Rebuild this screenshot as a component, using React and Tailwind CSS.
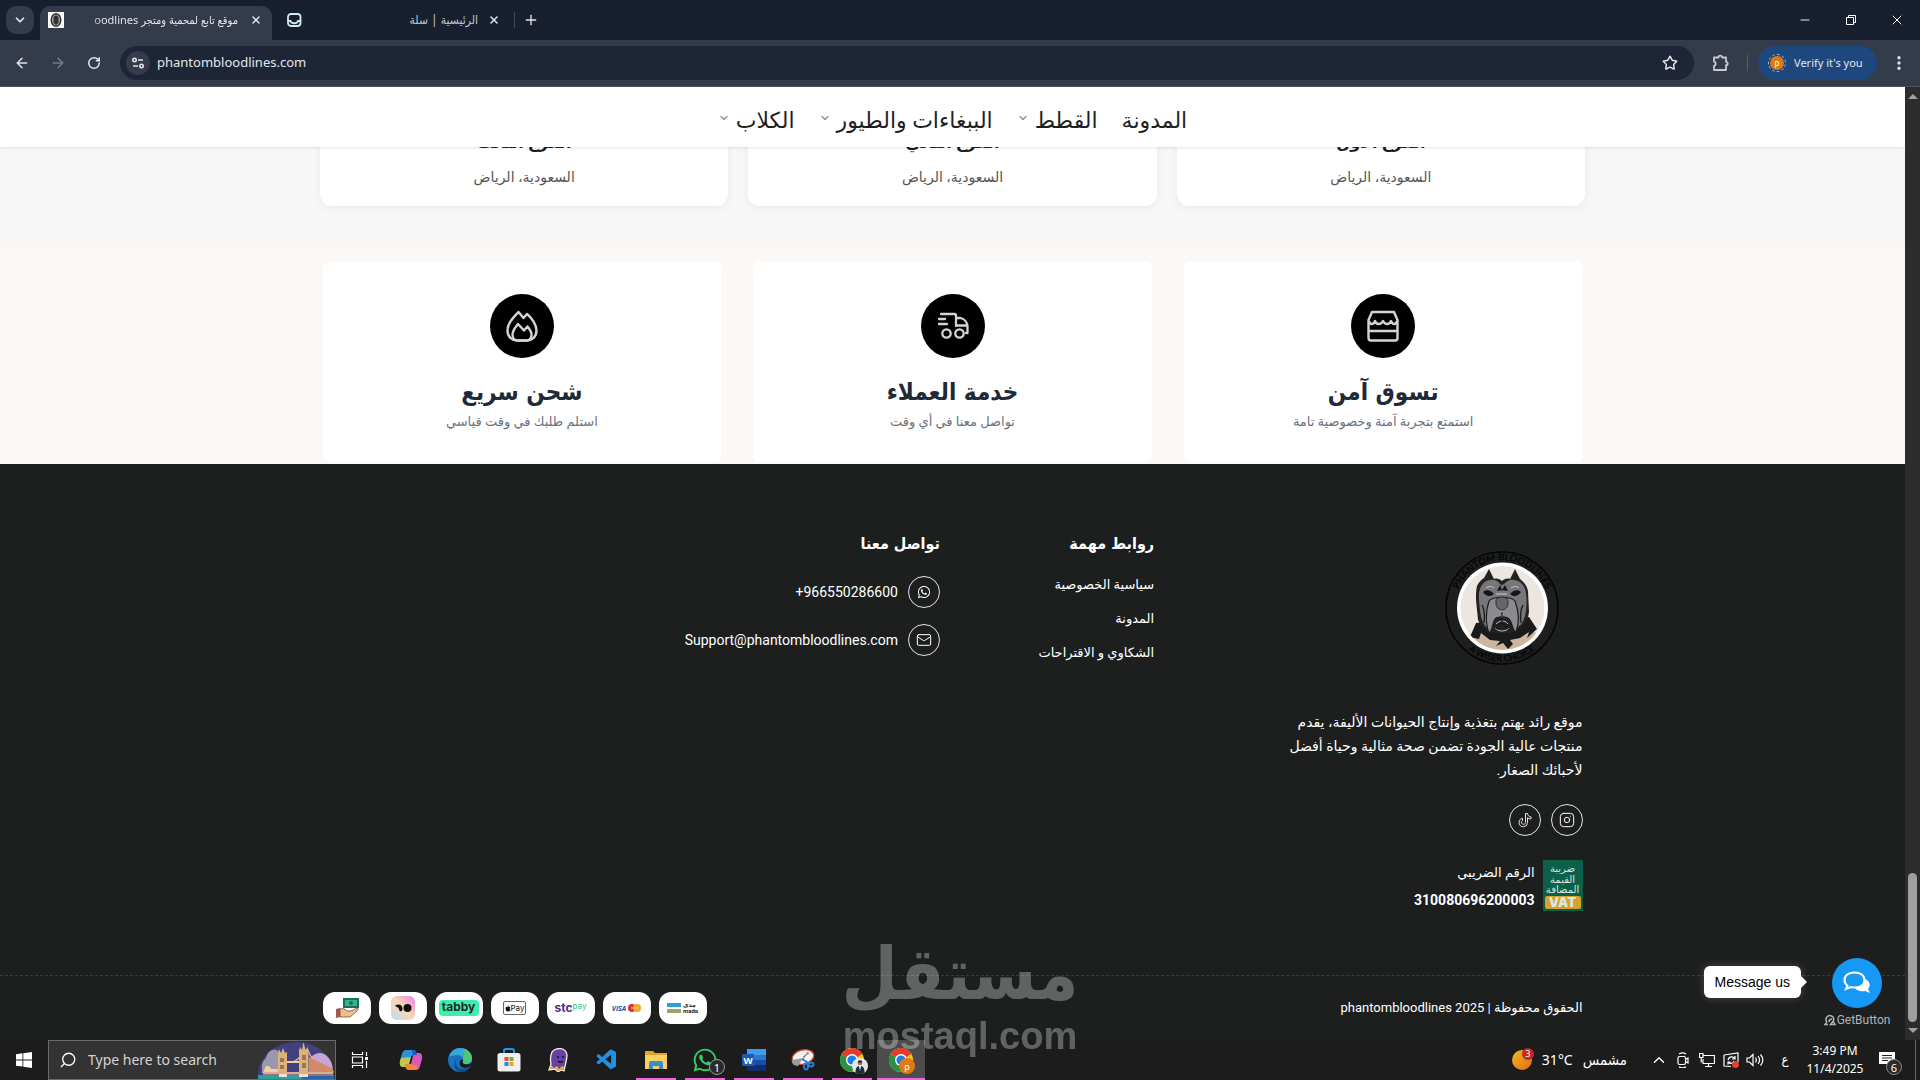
import React from 'react';
import { FaWhatsapp } from 'react-icons/fa';
import { VscVscode } from 'react-icons/vsc';
import {
  ArrowLeft,
  ArrowRight,
  ChevronDown,
  ChevronUp,
  EllipsisVertical,
  Instagram,
  Mail,
  Minus,
  Plus,
  RotateCw,
  Search,
  Star,
  X,
} from 'lucide-react';

const navItems = [
  { label: 'المدونة', menu: false },
  { label: 'القطط', menu: true },
  { label: 'الببغاءات والطيور', menu: true },
  { label: 'الكلاب', menu: true },
];

const branches = ['الفرع الأول', 'الفرع الثاني', 'الفرع الثالث'];

const StoreIcon = () => (
  <svg viewBox="0 0 32 32" className="size-8" fill="none" stroke="#d4d4d4" strokeWidth="2.4" strokeLinejoin="round">
    <path d="M5 2h22l3.500 8v18a2.500 2.500 0 0 1-2.500 2.500H4A2.500 2.500 0 0 1 1.500 28V10z" />
    <path d="M2 11c1 4 4.500 4 6 0c1.500 4 6 4 8 0c2 4 6.500 4 8 0c1.500 4 5 4 6 0M2 21h28" />
  </svg>
);

const TruckIcon = () => (
  <svg viewBox="0 0 32 32" className="size-8" fill="none" stroke="#d4d4d4" strokeWidth="2.3" strokeLinejoin="round" strokeLinecap="round">
    <path d="M4 4h13.500a1.500 1.500 0 0 1 1.500 1.500V16M2 9h6M2 14h8M19 8h4.500c4 1 7 4.500 7 9v6H29M19 15.500h11" />
    <circle cx="9.500" cy="23.500" r="4.200" />
    <circle cx="22.500" cy="23.500" r="4.200" />
  </svg>
);

const FireIcon = () => (
  <svg viewBox="0 0 32 32" className="size-8" fill="none" stroke="#d4d4d4" strokeWidth="2.4" strokeLinejoin="round">
    <path d="M12.500 2C7 8 1.500 13 1.500 20.500C1.500 27 6 30.500 11 30.500h10c5 0 9.500-3.500 9.500-10c0-6-5-13-9.500-16.500L17.500 8z" />
    <path d="M12 14c-3 4-5.500 6.500-5.500 10.500c0 4 2.500 6 5 6h9c3 0 5-2 5-6c0-3-2-5.500-4-8l-3.500 4z" />
  </svg>
);

const features = [
  { title: 'تسوق آمن', text: 'استمتع بتجربة آمنة وخصوصية تامة', Icon: StoreIcon },
  { title: 'خدمة العملاء', text: 'تواصل معنا في أي وقت', Icon: TruckIcon },
  { title: 'شحن سريع', text: 'استلم طلبك في وقت قياسي', Icon: FireIcon },
];

const TikTokIcon = () => (
  <svg viewBox="0 0 16 16" className="size-4" fill="none" stroke="#e5e5e5" strokeWidth="1" strokeLinejoin="round">
    <path d="M8.500 1.500h2c.2 2 1.500 3.200 3.500 3.400v2c-1.400 0-2.500-.4-3.500-1.100v4.700a4.200 4.200 0 1 1-5-4.100v2.200a2 2 0 1 0 3 1.900z" />
  </svg>
);

const DogLogo = () => (
  <svg viewBox="0 0 114 114" className="size-[114px]" role="img" aria-label="Phantom Bloodlines">
    <defs>
      <path id="ringTop" d="M9.500 57a47.500 47.500 0 0 1 95 0" />
      <path id="ringBottom" d="M3.500 57a53.500 53.500 0 0 0 107 0" />
      <clipPath id="dogClip">
        <circle cx="57.500" cy="57" r="42" />
      </clipPath>
    </defs>
    <circle cx="57" cy="57" r="56" fill="none" stroke="#050505" strokeWidth="1.600" />
    <text fill="#050505" fontSize="9.500" fontWeight="700" fontFamily="Lato, sans-serif">
      <textPath href="#ringTop" startOffset="50%" textAnchor="middle">PHANTOM BLOODLINES</textPath>
    </text>
    <text fill="#050505" fontSize="9" fontWeight="700" fontFamily="Lato, sans-serif">
      <textPath href="#ringBottom" startOffset="50%" textAnchor="middle">A WISER CHOICE</textPath>
    </text>
    <circle cx="57.500" cy="57" r="45.500" fill="#fff" />
    <circle cx="57.500" cy="57" r="42" fill="#ebe6df" />
    <g clipPath="url(#dogClip)">
      <path d="M22 86l10-8h50l14 6v24H20z" fill="#cdb5a0" />
      <path d="M31 72l-6 14l9 2l2-6l9 7l10 1l-4 5l7-3l5 6l5-5l-3-4l10-2l9-6l-2 6l10-9L84 66z" fill="#1b1a1b" />
      <path d="M32 35c2-4 4-6 7-8l5-9l5 10c3-1 6 0 8 2c2-2 5-3 8-2l5-10l5 10c4 3 7 7 8 12l1 21c-1 8-4 13-8 16c-5 4-9 5-13 5H51c-8-1-14-4-18-13l-2-20c0-6 0-11 1-14z" fill="#232122" />
      <path d="M35 38c2-6 7-10 14-9c4 0 6 5 8 5s4-4 8-5c7-1 13 3 15 9c2 6 2 14 1 21c-1 9-4 15-8 17c-5-1-3-9-6-12c-4-3-14-3-18 0c-3 3-1 11-6 13c-5-3-7-9-8-18c-1-8-2-16 0-21z" fill="#77767a" />
      <path d="M44 50c4-5 22-5 26 0c3 8 5 20 1 31c-4-1-3-9-7-13c-2-3-12-3-14 0c-3 4-2 12-6 14c-4-10-3-23 0-32z" fill="#8b8a8e" stroke="#1c1b1c" strokeWidth="1.200" />
      <path d="M51 49c2-4 10-4 12 0v4c0 3-3 6-6 6s-6-3-6-6z" fill="#66656a" stroke="#222" strokeWidth=".8" />
      <path d="M38 41c3-3 8-2 11 2c-3 3-8 3-11-2zM76 41c-3-3-8-2-11 2c3 3 8 3 11-2zM52 40l3-6l2 5l3-5l3 6c-4-1-7-1-11 0z" fill="#161516" />
      <path d="M57 60v7M50 77c3 4 11 4 14 0M51 73c4-4 9-4 12 0M41 37c3-2 6-2 8 0M66 37c3-2 6-2 8 0M51 43h11" fill="none" stroke="#d4d3d6" strokeWidth=".9" />
      <path d="M57 61v10l-6 7M57 71l6 7M37 54c3 5 3 10 2 18M78 54c-3 5-3 10-2 18" fill="none" stroke="#1b1a1b" strokeWidth="1.300" />
    </g>
  </svg>
);

const Puzzle = () => (
  <svg viewBox="0 0 18 18" className="size-[18px]" fill="none" stroke="#c7cad1" strokeWidth="1.800" strokeLinejoin="round">
    <path d="M2 3.500h4.500a1.800 1.800 0 0 1 3.600 0H14v4.300a1.700 1.700 0 0 1 0 3.400V16H2v-4a2.200 2.200 0 0 0 0-4.300z" />
  </svg>
);

const BrowserChrome = () => (
  <header className="shrink-0 border-b border-[#51545c] bg-[#343b4b] font-['Noto_Sans','DejaVu_Sans_Condensed','DejaVu_Sans',sans-serif] text-[#e3e5e9]">
    <div className="flex h-10 items-center bg-[#182030]">
      <button aria-label="Search tabs" className="ml-1.5 flex size-7 items-center justify-center rounded-[10px] bg-[#343b4b]">
        <ChevronDown className="size-3.5" strokeWidth={3} />
      </button>
      <div className="ml-1.5 flex h-[34px] w-[232px] items-center self-end rounded-t-[10px] bg-[#343b4b] px-2 pb-1.5">
        <svg viewBox="0 0 16 16" className="size-4 shrink-0 bg-white">
          <ellipse cx="8" cy="8" rx="5.500" ry="7" fill="#333" />
          <ellipse cx="8" cy="8" rx="4" ry="5.500" fill="#aaa" />
          <path d="M5.500 5l1.500-1.500h2L10.500 5v6L8 13l-2.500-2z" fill="#333" />
        </svg>
        <span dir="rtl" className="ml-2 flex-1 text-[11px] whitespace-nowrap [mask-image:linear-gradient(to_right,transparent,black_32px)]">
          موقع تابع لمحمية ومتجر oodlines
        </span>
        <button aria-label="Close tab" className="ml-2.5 flex size-4 items-center justify-center">
          <X className="size-3" strokeWidth={3} />
        </button>
      </div>
      <div className="flex h-[34px] w-[242px] items-center pr-3 pl-3.5">
        <svg viewBox="0 0 16 16" className="size-4" fill="none" stroke="#cfeeec" strokeWidth="1.800">
          <rect x="2" y="2" width="12.500" height="12" rx="3" />
          <path d="M2 9h2.500c1 3 6.500 3 7.500 0h2.500" />
        </svg>
        <span dir="rtl" className="flex-1 text-xs text-[#c3c6cc]">الرئيسية | سلة</span>
        <button aria-label="Close tab" className="ml-2 flex size-4 items-center justify-center">
          <X className="size-3" strokeWidth={3} />
        </button>
      </div>
      <span className="h-4 w-px bg-[#414857]" />
      <button aria-label="New tab" className="ml-2 flex size-4 items-center justify-center">
        <Plus className="size-4" strokeWidth={2} />
      </button>
      <div className="ml-auto flex text-white">
        <button aria-label="Minimize" className="flex h-10 w-[46px] items-center justify-center">
          <Minus className="size-3.5" strokeWidth={1.5} />
        </button>
        <button aria-label="Restore" className="flex h-10 w-[46px] items-center justify-center">
          <svg viewBox="0 0 10 10" className="size-2.5" fill="none" stroke="currentColor">
            <path d="M.5 2.500h7v7h-7zM2.500 2.500v-2h7v7h-2" />
          </svg>
        </button>
        <button aria-label="Close" className="flex h-10 w-[46px] items-center justify-center">
          <X className="size-4" strokeWidth={1.5} />
        </button>
      </div>
    </div>
    <div className="flex h-[46px] items-center px-3">
      <button aria-label="Back" className="flex size-5 items-center justify-center">
        <ArrowLeft className="size-4" strokeWidth={2.2} />
      </button>
      <button aria-label="Forward" className="ml-4 flex size-5 items-center justify-center text-[#767b86]">
        <ArrowRight className="size-4" strokeWidth={2.2} />
      </button>
      <button aria-label="Reload" className="mx-4 flex size-5 items-center justify-center">
        <RotateCw className="size-3.5" strokeWidth={2.6} />
      </button>
      <div className="flex h-[34px] flex-1 items-center rounded-full bg-[#1e2536] pr-4 pl-1.5">
        <button aria-label="Site information" className="flex size-6 items-center justify-center rounded-full bg-[#343b4b]">
          <svg viewBox="0 0 14 14" className="size-3.5" fill="none" stroke="#e3e5e9" strokeWidth="1.600">
            <circle cx="3.500" cy="4" r="1.700" />
            <circle cx="10.500" cy="10" r="1.700" />
            <path d="M7 4h5M2 10h5" />
          </svg>
        </button>
        <input
          aria-label="Address"
          defaultValue="phantombloodlines.com"
          className="ml-[7px] flex-1 bg-transparent text-[13px] outline-none"
        />
        <button aria-label="Bookmark">
          <Star className="size-4" strokeWidth={2.2} />
        </button>
      </div>
      <button aria-label="Extensions" className="ml-[18px]">
        <Puzzle />
      </button>
      <span className="ml-[17px] h-4 w-px bg-[#565b67]" />
      <button className="ml-2.5 flex h-[34px] w-[119px] items-center gap-2 rounded-full bg-[#1e477e] pl-2.5 text-[11px]">
        <span className="flex size-[18px] shrink-0 items-center justify-center rounded-full border border-dashed border-[#9dbdf0]">
          <span className="flex size-3.5 items-center justify-center rounded-full bg-[#dd7a12] text-[8px] text-white">p</span>
        </span>
        Verify it's you
      </button>
      <button aria-label="Menu" className="ml-[13px]">
        <EllipsisVertical className="size-[18px]" strokeWidth={2.5} />
      </button>
    </div>
  </header>
);

const SiteNav = () => (
  <nav className="relative z-10 flex h-[60px] shrink-0 items-center justify-center gap-6 bg-white pt-1.5 shadow-[0_1px_3px_rgba(0,0,0,0.1)]">
    {navItems.map((item) => (
      <a key={item.label} href="#" className="flex items-center gap-1.5 text-[22px] text-[#1d1f1f]">
        {item.label}
        {item.menu && <ChevronDown className="mb-1 size-3 text-[#8b8d91]" strokeWidth={2.5} />}
      </a>
    ))}
  </nav>
);

const PayLogos = () => (
  <div className="flex flex-row-reverse gap-2">
    <span className="flex h-8 w-12 items-center justify-center rounded-xl bg-white">
      <svg viewBox="0 0 24 22" className="h-[22px] w-6">
        <rect x="8" y="1" width="16" height="10" fill="#1d6d5c" />
        <rect x="10" y="3" width="12" height="6" fill="#35b58a" />
        <circle cx="16" cy="6" r="2" fill="#1d6d5c" />
        <path d="M1 12l4-1v9l-4 1z" fill="#a35b4a" />
        <path d="M5 12c3-1 5 0 7 2h4l6-3c2 0 1 2 0 3l-7 6H5z" fill="#edbd94" stroke="#7a5038" strokeWidth=".8" />
      </svg>
    </span>
    <span className="flex h-8 w-12 items-center justify-center rounded-xl bg-white">
      <span className="flex size-6 items-center justify-center rounded-md bg-linear-to-tr from-[#b5dcf8] via-[#f9d8b4] to-[#ee7be8]">
        <svg viewBox="0 0 18 8" className="h-2 w-[18px]">
          <path d="M1 1.500C5-1 9 1 8.500 5.500C8 8 5 8 5 5C4 3 2 3 1 1.500z" fill="#111" />
          <circle cx="13.500" cy="4" r="4" fill="#111" />
        </svg>
      </span>
    </span>
    <span className="flex h-8 w-12 items-center justify-center rounded-xl bg-white">
      <span className="flex h-4 w-10 items-center justify-center rounded-sm bg-[#3bf0ae] pb-0.5 font-['Inter',sans-serif] text-[12px] leading-none font-bold text-[#292929]">tabby</span>
    </span>
    <span className="flex h-8 w-12 items-center justify-center rounded-xl bg-white">
      <span dir="ltr" className="flex h-3.5 w-[23px] items-center justify-center rounded-xs border border-[#666] font-['Inter',sans-serif] text-[8px] leading-none text-[#111]">
        <svg viewBox="0 0 8 9" className="h-[7px] w-1.5 shrink-0">
          <path d="M4 2.500C2 1.500.5 3 .8 5s1.500 4 3.200 3.300C5.500 9 7 7 7.300 6C6 5.500 6 3.500 7.200 3C6.200 1.800 5 2.200 4 2.500zM4 2C4 .8 4.700.2 5.600 0c0 1-.5 1.800-1.600 2z" fill="#111" />
        </svg>
        Pay
      </span>
    </span>
    <span dir="ltr" className="flex h-8 w-12 items-center justify-center rounded-xl bg-white font-['Inter',sans-serif] leading-none">
      <b className="text-[12px] text-[#4f2d7f]">stc</b>
      <span className="pb-1 text-[8px] text-[#25c78e]">pay</span>
    </span>
    <span dir="ltr" className="flex h-8 w-12 items-center justify-center rounded-xl bg-white font-['Open_Sans',sans-serif] leading-none">
      <b className="text-[7px] text-[#1f4f9e] italic">VISA</b>
      <svg viewBox="0 0 13 8" className="ml-0.5 h-2 w-[13px]">
        <circle cx="4" cy="4" r="4" fill="#df2f28" />
        <circle cx="9" cy="4" r="4" fill="#f5a52a" />
        <path d="M3 4h7" stroke="#f7d9c0" strokeWidth="1" />
      </svg>
    </span>
    <span dir="ltr" className="flex h-8 w-12 items-center justify-center gap-0.5 rounded-xl bg-white">
      <span className="flex flex-col gap-0.5">
        <span className="h-1 w-3.5 bg-[#2d9fd8]" />
        <span className="h-1 w-3.5 bg-[#9aa464]" />
      </span>
      <span className="flex flex-col text-[6px] leading-[6px] font-bold text-[#222]">
        <span>مدى</span>
        <span>mada</span>
      </span>
    </span>
  </div>
);

const Footer = () => (
  <footer className="flex flex-1 flex-col justify-between bg-[#1d1f1f] text-white">
    <div className="mx-auto grid w-full max-w-[1260px] grid-cols-[34%_17%_1fr] pt-16">
      <div>
        <div className="mt-[23px] mr-6">
          <DogLogo />
        </div>
        <p className="mt-[45px] text-sm leading-6">
          <span className="block">موقع رائد يهتم بتغذية وإنتاج الحيوانات الأليفة، يقدم</span>
          <span className="block">منتجات عالية الجودة تضمن صحة مثالية وحياة أفضل</span>
          <span className="block">لأحبائك الصغار.</span>
        </p>
        <div className="mt-[22px] flex gap-2.5">
          <a href="#" aria-label="Instagram" className="flex size-8 items-center justify-center rounded-full border border-[#e5e5e5]">
            <Instagram className="size-4" strokeWidth={1.5} />
          </a>
          <a href="#" aria-label="TikTok" className="flex size-8 items-center justify-center rounded-full border border-[#e5e5e5]">
            <TikTokIcon />
          </a>
        </div>
        <div className="mt-6 flex gap-2">
          <div className="flex h-[51px] w-10 flex-col items-center justify-between bg-[#0b6049] p-0.5 text-[10px] leading-[10px] text-[#d7e8e2]">
            <span className="pt-0.5">ضريبة</span>
            <span>القيمة</span>
            <span>المضافة</span>
            <span className="w-full rounded-xs bg-[#d9a02b] text-center font-['Inter',sans-serif] text-[13px] leading-[13px] font-black">VAT</span>
          </div>
          <div>
            <div className="text-[13px] leading-[26px]">الرقم الضريبي</div>
            <div className="text-sm leading-7 font-bold">310080696200003</div>
          </div>
        </div>
      </div>
      <div>
        <h3 className="font-['DejaVu_Sans_Condensed','DejaVu_Sans',sans-serif] text-[16px] leading-8 font-bold">روابط مهمة</h3>
        <ul className="mt-2 text-[13px] leading-[34px]">
          <li><a href="#">سياسية الخصوصية</a></li>
          <li><a href="#">المدونة</a></li>
          <li><a href="#">الشكاوي و الاقتراحات</a></li>
        </ul>
      </div>
      <div>
        <h3 className="font-['DejaVu_Sans_Condensed','DejaVu_Sans',sans-serif] text-[16px] leading-8 font-bold">تواصل معنا</h3>
        <ul className="mt-4 flex flex-col gap-4 text-sm">
          <li>
            <a href="#" className="flex items-center gap-2.5">
              <span className="flex size-8 items-center justify-center rounded-full border border-[#e5e5e5]">
                <FaWhatsapp className="size-3.5" />
              </span>
              <span dir="ltr">+966550286600</span>
            </a>
          </li>
          <li>
            <a href="#" className="flex items-center gap-2.5">
              <span className="flex size-8 items-center justify-center rounded-full border border-[#e5e5e5]">
                <Mail className="size-4" strokeWidth={1.5} />
              </span>
              <span>Support@phantombloodlines.com</span>
            </a>
          </li>
        </ul>
      </div>
    </div>
    <div className="border-t border-dashed border-[#3b3d3d] py-4">
      <div className="mx-auto flex w-full max-w-[1260px] items-center justify-between">
        <p className="text-[13px]">الحقوق محفوظة | 2025 phantombloodlines</p>
        <PayLogos />
      </div>
    </div>
  </footer>
);

const ChatWidget = () => (
  <div className="absolute right-[31px] bottom-3 z-20 flex items-start gap-6 font-['Liberation_Sans',sans-serif]">
    <div className="relative mt-2 flex h-8 items-center rounded-md bg-white px-[11px] text-sm text-black shadow-[0_0_8px_rgba(255,255,255,0.2)]">
      Message us
      <span className="absolute -right-1.5 border-y-6 border-l-6 border-y-transparent border-l-white" />
    </div>
    <div className="flex w-16 flex-col items-center">
      <button aria-label="Open chat" className="flex size-[50px] items-center justify-center rounded-full bg-[#1698f5]">
        <svg viewBox="0 0 28 24" className="h-6 w-7">
          <path d="M22 8c5 2 6 7 3 10l2 4l-5-2c-5 1-9-1-10-3c6 0 10-3 10-9z" fill="#fff" />
          <path d="M11.500 1.500c6 0 10 3 10 7.500s-4 7.500-10 7.500c-1.500 0-2.500 0-3.500-.4L3 18l1.500-3.500C2 13 1.500 11 1.500 9c0-4.500 4-7.500 10-7.500z" fill="#1698f5" stroke="#fff" strokeWidth="2" />
        </svg>
      </button>
      <a href="#" className="mt-1 flex items-center gap-px font-['Roboto',sans-serif] text-xs text-[#b3b4b6]">
        <svg viewBox="0 0 12 12" className="size-3" fill="none" stroke="currentColor" strokeWidth="1.500">
          <path d="M3 8A3.800 3.800 0 1 1 9.300 7L6.500 10.500h4.500L9.300 7.500M3 8L1 10.500h3M5 8c0-2 1.500-3 3-3" />
        </svg>
        GetButton
      </a>
    </div>
  </div>
);

const Scrollbar = () => (
  <div className="flex w-[15px] shrink-0 flex-col items-center justify-between bg-[#2c2c2c] py-[7px]">
    <span className="border-x-5 border-b-5 border-x-transparent border-b-[#a0a0a0]" />
    <span className="flex flex-1 flex-col justify-end pb-1.5">
      <span className="h-[149px] w-[9px] rounded-full bg-[#9f9f9f]" />
    </span>
    <span className="border-x-5 border-t-5 border-x-transparent border-t-[#a0a0a0]" />
  </div>
);

const ChromeIcon = () => (
  <svg viewBox="0 0 24 24" className="size-6">
    <circle cx="12" cy="12" r="12" fill="#fbc116" />
    <path d="M12 12L1.600 6A12 12 0 0 1 22.400 6z" fill="#e33b2e" />
    <path d="M12 12L1.600 6A12 12 0 0 0 12 24l5-9z" fill="#2a9147" />
    <circle cx="12" cy="12" r="6" fill="#fff" />
    <circle cx="12" cy="12" r="4.600" fill="#1a7df0" />
  </svg>
);

const BridgeArt = () => (
  <svg viewBox="0 0 78 38" className="h-[38px] w-[78px]">
    <path d="M1 38C0 15 18 1 40 1s37 16 37 37z" fill="#43407f" />
    <path d="M5 27c-1-7 4-8 5-13c3-7 12-7 13 0l6 10v8H5z" fill="#9c97b0" />
    <path d="M52 22c1-9 10-12 15-9c6 3 9 10 9 18H52z" fill="#c9a3d6" />
    <path d="M24 15q8 13 20 0M51 9q6 18 26 22" fill="none" stroke="#e9b99c" strokeWidth="1.200" />
    <path d="M52 16l24 12v4H52z" fill="#d48a68" />
    <path d="M21 33V13l1-5l2 4l2-5l2 5l2-1v22zM42 33V10l1-4l2 3l1.500-8l2 8l2-3l1 4v23z" fill="#dcb27d" />
    <path d="M23 17h4v4h-4zM23 24h4v4h-4zM45 14h4v5h-4zM45 22h4v5h-4z" fill="#9c7650" />
    <path d="M30 20h12v2H30zM7 29l2-4h3l2 3h7v5H6z" fill="#f0d0a2" />
    <path d="M6 31h70v2.500H6z" fill="#dcae8c" />
    <path d="M1 34h76v4H1z" fill="#2c9fa0" />
    <path d="M46 35h31v3H44z" fill="#2467ad" />
    <path d="M22 33h8v3h-8zM42 33h9v3h-9z" fill="#efe2cc" />
  </svg>
);

const taskbarApps = [
  {
    name: 'Task View',
    icon: (
      <svg viewBox="0 0 18 16" className="h-4 w-[18px]" fill="none" stroke="#fff" strokeWidth="1.200">
        <path d="M1.500 0v2.500h10V0M1.500 16v-2.500h10V16M1.500 5h10v6h-10zM15.500 0v4M15.500 9v7" />
        <path d="M14 5h3v3h-3z" fill="#fff" stroke="none" />
      </svg>
    ),
  },
  {
    name: 'Copilot',
    icon: (
      <svg viewBox="0 0 24 24" className="size-6">
        <path d="M7 2h7c2 0 3 1 3.500 3l.5 2h-3c-2 0-3 1-3.500 3L10 16c-.500 2-1 3-3 3H4c-3 0-3.500-3-3-6L3 6c1-3 2-4 4-4z" fill="#2b93dc" />
        <path d="M2 10l10-1l-2 7c-.5 2-1 3-3 3H4c-3 0-3.500-3-3-6z" fill="#bec94d" />
        <path d="M17 22h-7c-2 0-3-1-3.500-3L6 17h3c2 0 3-1 3.500-3L14 8c.5-2 1-3 3-3h3c3 0 3.500 3 3 6l-2 7c-1 3-2 4-4 4z" fill="#dd59b9" />
        <path d="M6 16h6l7 2c-1 3-1 4-3 4h-6c-2 0-3-1-3.500-3z" fill="#f0853b" />
        <path d="M13 2h1c2 0 3 1 4 5h-4z" fill="#2056bd" />
      </svg>
    ),
  },
  {
    name: 'Edge',
    icon: (
      <svg viewBox="0 0 24 24" className="size-6">
        <circle cx="12" cy="12" r="12" fill="#1673bd" />
        <path d="M1 9C3 3 7 0 12 0c7 0 12 5 12 10c0 4-3 6-6 6c-4 0-4-1-3-3c1-3-2-6-6-6c-3 0-6 1-8 2z" fill="#35a9d8" />
        <path d="M15 .5c5 1 9 5 9 9.500c0 4-3 6-6 6s-4-1-3-3c2-4 1-9 0-12.500z" fill="#4cc878" />
        <path d="M9 10c-3 5 0 11 6 11c3 0 6-1 8-3c-2 4-6 6-11 6c-5-1-8-8-3-14z" fill="#164c85" />
        <path d="M15 13c-1 2 0 3 3 3.500c3 0 5-1 6-2.500c0 3-3 6-7 6c-5 0-6-4-5-7c1-2 3-2 3 0z" fill="#1d1d1d" />
      </svg>
    ),
  },
  {
    name: 'Store',
    icon: (
      <svg viewBox="0 0 24 24" className="size-6">
        <path d="M7 7V3a2 2 0 0 1 2-2h6a2 2 0 0 1 2 2v4" fill="none" stroke="#2196e8" strokeWidth="2" />
        <rect x=".5" y="5" width="23" height="18.500" rx="2.500" fill="#efefef" />
        <path d="M7.500 9h4v4h-4z" fill="#e54c32" />
        <path d="M12.500 9h4v4h-4z" fill="#91a32f" />
        <path d="M7.500 14h4v4h-4z" fill="#2389d8" />
        <path d="M12.500 14h4v4h-4z" fill="#e4a91e" />
      </svg>
    ),
  },
  {
    name: 'Ghost',
    icon: (
      <svg viewBox="0 0 24 24" className="size-6">
        <path d="M6 4c4-5 14-5 15 3c0 5-2 10-3 16l-3-1l-3 2l-3-3l-6 1l2-6c-1-5-1-8 1-12z" fill="#6341a5" stroke="#f2efe9" strokeWidth="1.300" />
        <path d="M4 21l1-4l3 3l3-2l2 3l3-3l2 1l-1 3l-2-1l-3 2l-3-3z" fill="#f5b52c" />
        <path d="M12 8v2M17 8v2M12 13c2 2 4 1 5 0" stroke="#1b1030" strokeWidth="1.600" fill="none" />
      </svg>
    ),
  },
  { name: 'VS Code', icon: <VscVscode className="size-6 text-[#2490df]" /> },
  {
    name: 'Explorer',
    running: true,
    icon: (
      <svg viewBox="0 0 24 24" className="size-6">
        <path d="M1 3h8l2 2h12v16H1z" fill="#e2a42c" />
        <path d="M1 7h22v14H1z" fill="#fbd063" />
        <path d="M5 21v-6l1-2h12l1 2v6h-4v-3H9v3z" fill="#338fce" />
      </svg>
    ),
  },
  {
    name: 'WhatsApp',
    running: true,
    icon: <FaWhatsapp className="size-[26px] text-[#2fd068]" />,
    badge: '1',
  },
  {
    name: 'Word',
    running: true,
    icon: (
      <svg viewBox="0 0 24 24" className="size-6">
        <path d="M5 1h19v22H5z" fill="#174ea6" />
        <path d="M5 1h19v6H5z" fill="#3f9ceb" />
        <path d="M5 7h19v5H5z" fill="#2878d1" />
        <path d="M5 17h19v6H5z" fill="#112e6c" />
        <path d="M0 6h12v12H0z" fill="#1d59b5" />
        <text x="6" y="15.500" fontSize="9.500" fontWeight="700" textAnchor="middle" fill="#fff" fontFamily="Open Sans, sans-serif">W</text>
      </svg>
    ),
  },
  {
    name: 'Snipping Tool',
    running: true,
    icon: (
      <svg viewBox="0 0 24 24" className="size-6">
        <ellipse cx="12" cy="9" rx="11" ry="7" transform="rotate(-14 12 9)" fill="#f3f3f3" stroke="#d9402f" strokeWidth="1.300" />
        <path d="M1 12l11-2l-5 8c-4 0-7-3-6-6z" fill="#9b9b9b" />
        <path d="M12 9l6-4M12 11L17 4" stroke="#777" />
        <g fill="none" stroke="#2c7dd0" strokeWidth="2">
          <path d="M11 11l8 5" />
          <ellipse cx="15" cy="18.500" rx="2" ry="3" />
          <ellipse cx="20" cy="16.500" rx="2.500" ry="2" />
        </g>
      </svg>
    ),
  },
  {
    name: 'Chrome',
    running: true,
    icon: <ChromeIcon />,
    person: true,
  },
  { name: 'Chrome profile p', running: true, active: true, icon: <ChromeIcon />, profile: true },
];

const Taskbar = () => (
  <div className="flex h-10 shrink-0 bg-[#1c1c1c] font-['Noto_Sans','DejaVu_Sans_Condensed','DejaVu_Sans',sans-serif] text-white">
    <button aria-label="Start" className="flex w-12 items-center justify-center">
      <svg viewBox="0 0 16 16" className="size-4" fill="#fff">
        <path d="M0 2.200l6.500-.9v6.200H0zM7.300 1.200L16 0v7.500H7.300zM0 8.400h6.500v6.200L0 13.700zM7.300 8.400H16V16l-8.700-1.200z" />
      </svg>
    </button>
    <div className="flex w-72 items-center border border-[#6b6b6b] bg-[#333] pl-2.5">
      <Search className="size-[18px] -scale-x-100" strokeWidth={1.7} />
      <input
        aria-label="Search"
        placeholder="Type here to search"
        className="ml-[11px] w-0 flex-1 bg-transparent text-sm outline-none placeholder:text-[#d3d3d3]"
      />
      <BridgeArt />
    </div>
    <div className="flex gap-px">
      {taskbarApps.map((app) => (
        <button
          key={app.name}
          aria-label={app.name}
          className={`relative flex w-12 items-center justify-center first:mr-0.5 ${app.active ? 'bg-[#4c4c4c]' : ''}`}
        >
          {app.icon}
          {app.badge && (
            <span className="absolute top-[19px] right-1 flex size-4 items-center justify-center rounded-full border border-[#999] bg-[#2b2b2b] text-[11px] leading-none">
              {app.badge}
            </span>
          )}
          {app.profile && (
            <span className="absolute top-[18px] right-2.5 flex size-4 items-center justify-center rounded-full bg-[#dd7a12] text-[9px] leading-none">p</span>
          )}
          {app.person && (
            <svg viewBox="0 0 16 16" className="absolute top-[18px] right-2 size-4">
              <circle cx="8" cy="8" r="8" fill="#e6e6e8" />
              <circle cx="8" cy="5" r="2.300" fill="#9c7159" />
              <path d="M5.700 4.500a2.300 2.300 0 0 1 4.600 0z" fill="#222" />
              <path d="M3.500 14.500c0-4 1-6.500 4.500-6.500s4.500 2.500 4.500 6.500c-2.500 2-6.500 2-9 0z" fill="#1d2a40" />
              <path d="M7 8h2l-1 5z" fill="#fff" />
            </svg>
          )}
          {app.running && (
            <span className={`absolute bottom-0 h-0.5 bg-[#ee66d8] ${app.active ? 'w-12' : 'w-10'}`} />
          )}
        </button>
      ))}
    </div>
    <div className="ml-auto flex items-center">
      <button className="flex items-center text-sm">
        <span className="relative mr-2.5 size-5 rounded-full bg-linear-to-br from-[#f1b626] to-[#df6d12]">
          <span className="absolute -top-0.5 -right-0.5 flex size-3 items-center justify-center rounded-full bg-[#c4271f] text-[9px] leading-none">3</span>
        </span>
        31°C
        <span className="ml-2.5 text-[15px]">مشمس</span>
      </button>
      <button aria-label="Show hidden icons" className="ml-[23px]">
        <ChevronUp className="size-[18px]" strokeWidth={1.8} />
      </button>
      <svg viewBox="0 0 16 16" className="ml-[7px] size-4" fill="none" stroke="#fff" strokeWidth="1.200">
        <rect x="3" y="4.500" width="7.500" height="8" rx="1.500" />
        <path d="M10.500 7.500l2.500-1.500v5l-2.500-1.500M4 2c2-1.300 5-1.300 7 0M4 14.800c2 1.200 5 1.200 7 0" />
      </svg>
      <svg viewBox="0 0 16 16" className="ml-2 size-4" fill="none" stroke="#fff" strokeWidth="1.200">
        <path d="M4 3.500h11.500v8H4V7M9.500 11.500v3M6 14.500h7M.5 1.500h3.500v4H.5zM2.200 5.500v5" />
      </svg>
      <svg viewBox="0 0 16 16" className="ml-2 size-4" fill="none" stroke="#fff" strokeWidth="1.200">
        <path d="M1 3l14-2v9M1 3v11l7 .5M5 8c1-4 6-4 7-1M12 4v3H9M11 9c-1 3-5 3-6 1M5 12.500V10h2.500" />
        <circle cx="12.500" cy="12.500" r="3.500" fill="#e83f35" stroke="none" />
      </svg>
      <svg viewBox="0 0 18 16" className="ml-[7px] h-4 w-[18px]" fill="none" stroke="#fff" strokeWidth="1.200">
        <path d="M1 6h2.500L7 2.500v11L3.500 10H1zM9.500 5.500c1 1.500 1 3.500 0 5M12 4c2 2.500 2 5.500 0 8M14.500 2.500c3 3.500 3 7.500 0 11" />
      </svg>
      <span className="ml-[11px] w-5 text-center text-[13px]">ع</span>
      <button className="w-20 text-center text-xs leading-[18px]">
        <span className="block">3:49 PM</span>
        <span className="block">11/4/2025</span>
      </button>
      <button aria-label="Notifications" className="relative ml-1">
        <svg viewBox="0 0 16 16" className="size-4">
          <path d="M0 0h16v12h-4v3.500L8 12H0z" fill="#fff" />
          <path d="M3 3.500h10M3 6h10M3 8.500h6" stroke="#222" />
        </svg>
        <span className="absolute top-[7px] left-[7px] flex size-4 items-center justify-center rounded-full border border-[#888] bg-[#2b2b2b] text-[11px] leading-none">6</span>
      </button>
      <span className="mr-1 ml-5 h-10 w-px bg-[#666]" />
    </div>
  </div>
);

const Watermark = () => (
  <div className="pointer-events-none absolute bottom-6 left-[845px] z-30 flex w-[230px] flex-col items-center text-white opacity-30">
    <span className="font-['DejaVu_Sans_Condensed','DejaVu_Sans',sans-serif] text-[72px] leading-[84px] font-bold">مستقل</span>
    <span className="font-['Liberation_Sans',sans-serif] text-[38px] leading-10 font-bold">mostaql.com</span>
  </div>
);

export default function App() {
  return (
    <div className="relative flex h-screen flex-col overflow-hidden">
      <BrowserChrome />
      <div className="relative flex min-h-0 flex-1">
        <main
          dir="rtl"
          className="flex min-w-0 flex-1 flex-col overflow-hidden bg-white font-['Roboto','DejaVu_Sans',sans-serif]"
        >
          <SiteNav />
          <section className="-mt-8 shrink-0 bg-[#f7f7f7] pb-10">
            <div className="mx-auto grid max-w-[1265px] grid-cols-3 gap-5">
              {branches.map((name) => (
                <div key={name} className="rounded-b-xl bg-white pt-3 pb-4 text-center shadow-[0_2px_10px_rgba(0,0,0,0.06)]">
                  <h3 className="text-[16px] leading-8 font-bold text-[#1d1f1f]">{name}</h3>
                  <p className="mt-1.5 text-sm leading-[25px] text-[#555]">السعودية، الرياض</p>
                </div>
              ))}
            </div>
          </section>
          <section className="shrink-0 bg-[#fcf8f5] pt-4 pb-0.5">
            <div className="mx-auto grid max-w-[1260px] grid-cols-3 gap-8">
              {features.map(({ title, text, Icon }) => (
                <div key={title} className="flex flex-col items-center rounded-md bg-white pt-8 pb-7">
                  <div className="flex size-16 items-center justify-center rounded-full bg-black">
                    <Icon />
                  </div>
                  <h2 className="mt-4 font-['DejaVu_Sans_Condensed','DejaVu_Sans',sans-serif] text-[24px] leading-9 font-bold text-[#1f2937]">
                    {title}
                  </h2>
                  <p className="text-[13px] leading-6 text-[#6b7280]">{text}</p>
                </div>
              ))}
            </div>
          </section>
          <Footer />
        </main>
        <Scrollbar />
        <ChatWidget />
      </div>
      <Taskbar />
      <Watermark />
    </div>
  );
}
